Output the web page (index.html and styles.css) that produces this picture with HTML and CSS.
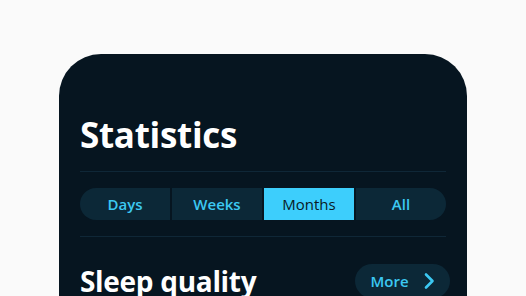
FILE: index.html
```html
<!DOCTYPE html>
<html>
<head>
<meta charset="utf-8">
<link rel="stylesheet" href="styles.css">
</head>
<body>
<div class="card">
  <h1 class="title">Statistics</h1>
  <div class="rule"></div>
  <div class="seg">
    <div class="seg-item first">Days</div>
    <div class="seg-item">Weeks</div>
    <div class="seg-item active">Months</div>
    <div class="seg-item last">All</div>
  </div>
  <div class="rule"></div>
  <div class="row">
    <h2 class="subtitle">Sleep quality</h2>
    <div class="more">More
      <svg class="chev" width="12" height="18" viewBox="0 0 12 18"><path d="M3 2.5 L9.5 9 L3 15.5" fill="none" stroke="#3cc8f2" stroke-width="2.6" stroke-linecap="round" stroke-linejoin="round"/></svg>
    </div>
  </div>
</div>
</body>
</html>
```
FILE: styles.css
```css
html, body { margin: 0; padding: 0; }
body {
  background: #fafafa;
  width: 526px;
  height: 296px;
  overflow: hidden;
  font-family: "Open Sans", "Noto Sans", sans-serif;
  font-variant-ligatures: none;
}
.card {
  margin: 54px 0 0 59px;
  width: 408px;
  height: 300px;
  box-sizing: border-box;
  padding: 59px 21px 0 21px;
  background: #061520;
  border-radius: 42px 42px 0 0;
}
.title {
  margin: 0;
  color: #ffffff;
  font-size: 35px;
  font-weight: 700;
  letter-spacing: -0.3px;
  line-height: 44px;
  height: 44px;
}
.rule {
  height: 1px;
  background: #0f2737;
}
.card .rule:first-of-type { margin-top: 14px; }
.seg {
  display: flex;
  gap: 2px;
  height: 32px;
  margin: 16px 0 16px 0;
}
.seg-item {
  flex: 1;
  display: flex;
  align-items: center;
  justify-content: center;
  background: #0c2837;
  color: #3cc8f2;
  font-size: 15px;
  font-weight: 600;
}
.seg-item.first { border-radius: 16px 0 0 16px; }
.seg-item.last { border-radius: 0 16px 16px 0; }
.seg-item.active { background: #3dcefc; color: #0a1a24; font-weight: 500; }
.row {
  display: flex;
  justify-content: space-between;
  align-items: flex-start;
  margin-top: 26px;
  margin-right: -4px;
}
.subtitle {
  margin: 0;
  color: #ffffff;
  font-size: 28px;
  font-weight: 700;
  letter-spacing: -0.3px;
  line-height: 36px;
}
.more {
  width: 95px;
  height: 34px;
  border-radius: 17px;
  background: #0c2837;
  color: #3cc8f2;
  font-size: 15px;
  font-weight: 600;
  display: flex;
  align-items: center;
  justify-content: center;
  gap: 14px;
  margin-top: 1px;
}
.chev { display: block; }
```
